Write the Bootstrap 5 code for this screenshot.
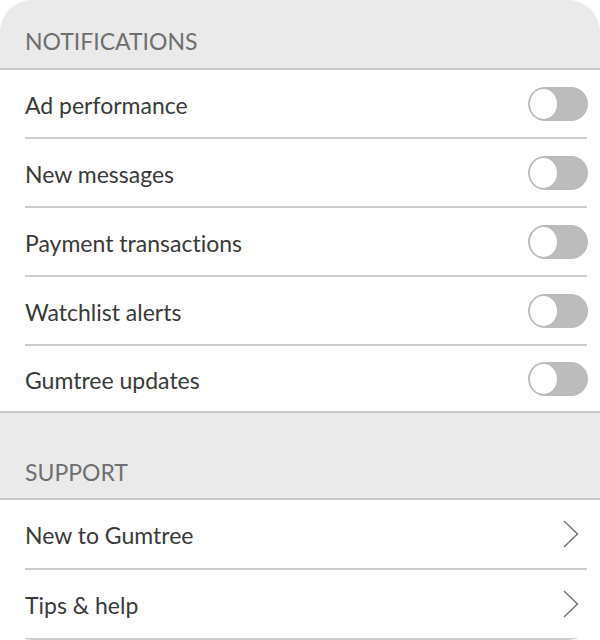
<!DOCTYPE html>
<html lang="en">
<head>
<meta charset="utf-8">
<meta name="viewport" content="width=device-width, initial-scale=1">
<title>Settings</title>
<link rel="stylesheet" href="https://cdn.jsdelivr.net/npm/bootstrap@5.3.0/dist/css/bootstrap.min.css">
<style>
body { font-family: Lato, sans-serif; font-size: 23px; line-height: 28px; color: #3a3a3a; background: #fff; font-variant-ligatures: none; }
.panel { border-radius: 32px; background: #fff; }
.section-title { font-size: 23px; line-height: 28px; color: #6f6f6f; background: #eaeaea; border-bottom: 2px solid #c8c8c8; padding: 27px 25px 13px; }
.section-title.later { border-top: 2px solid #c8c8c8; padding-top: 45px; padding-bottom: 12px; }
.rows { padding-left: 25px; padding-right: 13px; }
.setting { height: 69px; border-bottom: 2px solid #cfcfcf; color: #3a3a3a; }
.setting-label { padding-top: 2px; }
.toggles .setting:last-child { height: 65px; border-bottom: 0; }
.links .setting { height: 70px; }
.toggle { width: 60px; height: 34px; margin: 0 -1px 0 0; border: 0; border-radius: 17px; background: #bcbcbc; appearance: none; padding: 2px; display: flex; }
.toggle::before { content: ""; width: 27px; height: 30px; border-radius: 50%; background: #fff; }
.toggle:checked { justify-content: flex-end; background: #72ef36; }
.chevron { width: 16px; height: 28px; margin-right: 8px; }
</style>
</head>
<body>
<main class="panel overflow-hidden">
  <section>
    <h2 class="section-title fw-normal mb-0">NOTIFICATIONS</h2>
    <div class="rows toggles">
      <div class="setting d-flex align-items-center justify-content-between"><label class="setting-label" for="ads">Ad performance</label><input class="toggle" type="checkbox" role="switch" id="ads"></div>
      <div class="setting d-flex align-items-center justify-content-between"><label class="setting-label" for="messages">New messages</label><input class="toggle" type="checkbox" role="switch" id="messages"></div>
      <div class="setting d-flex align-items-center justify-content-between"><label class="setting-label" for="payments">Payment transactions</label><input class="toggle" type="checkbox" role="switch" id="payments"></div>
      <div class="setting d-flex align-items-center justify-content-between"><label class="setting-label" for="watchlist">Watchlist alerts</label><input class="toggle" type="checkbox" role="switch" id="watchlist"></div>
      <div class="setting d-flex align-items-center justify-content-between"><label class="setting-label" for="updates">Gumtree updates</label><input class="toggle" type="checkbox" role="switch" id="updates"></div>
    </div>
  </section>
  <section>
    <h2 class="section-title later fw-normal mb-0">SUPPORT</h2>
    <nav class="rows links" aria-label="Support">
      <a class="setting d-flex align-items-center justify-content-between text-decoration-none" href="#new"><span class="setting-label">New to Gumtree</span><svg class="chevron" viewBox="0 0 16 28" fill="none" stroke="#777" stroke-width="1.5" aria-hidden="true"><path d="M1 1L14.500 14L1 27"/></svg></a>
      <a class="setting d-flex align-items-center justify-content-between text-decoration-none" href="#tips"><span class="setting-label">Tips &amp; help</span><svg class="chevron" viewBox="0 0 16 28" fill="none" stroke="#777" stroke-width="1.5" aria-hidden="true"><path d="M1 1L14.500 14L1 27"/></svg></a>
    </nav>
  </section>
</main>
<script src="https://cdn.jsdelivr.net/npm/bootstrap@5.3.0/dist/js/bootstrap.bundle.min.js"></script>
</body>
</html>
